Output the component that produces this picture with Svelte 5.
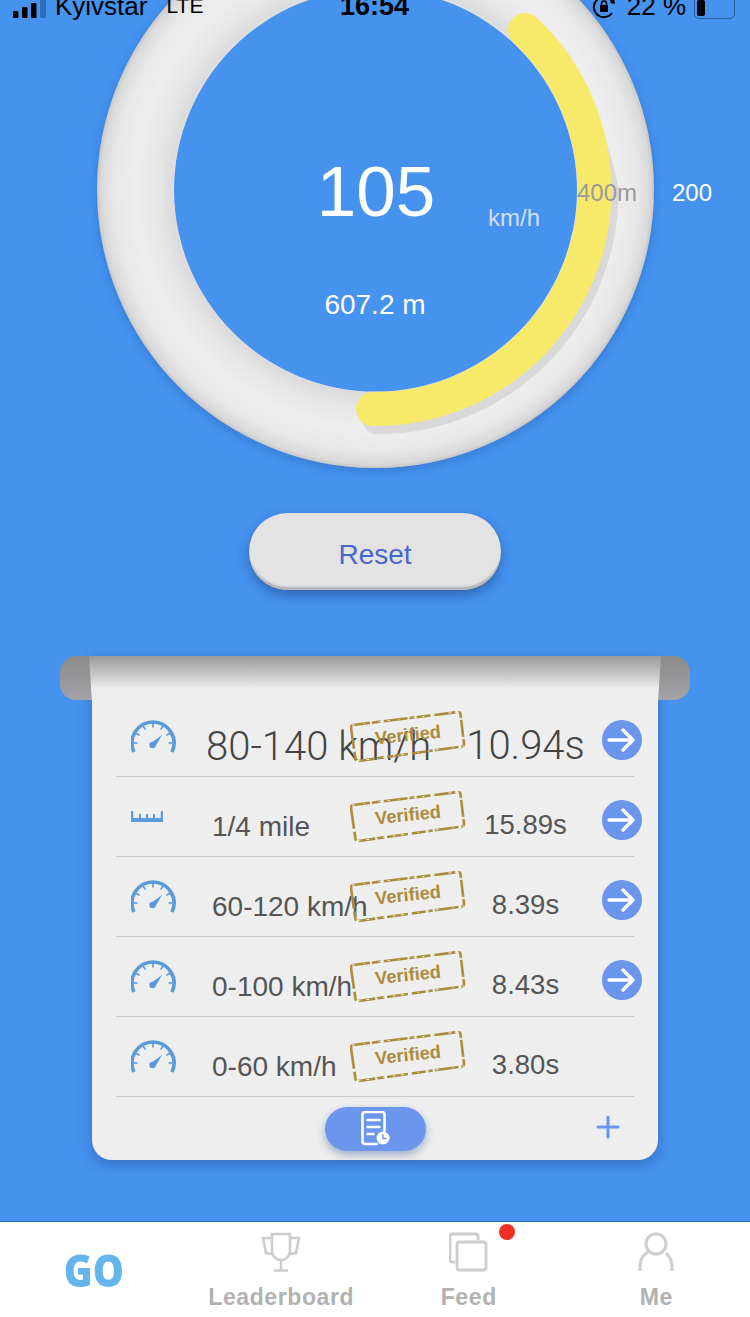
<script>
	const runs = [
		{ icon: 'gauge', label: '80-140 km/h', time: '10.94s', arrow: true, big: true },
		{ icon: 'ruler', label: '1/4 mile', time: '15.89s', arrow: true },
		{ icon: 'gauge', label: '60-120 km/h', time: '8.39s', arrow: true },
		{ icon: 'gauge', label: '0-100 km/h', time: '8.43s', arrow: true },
		{ icon: 'gauge', label: '0-60 km/h', time: '3.80s', arrow: false }
	];

	// dial ticks, degrees from straight up
	const ticks = [-90, -60, -30, 0, 30, 60, 90].map((deg) => {
		const a = (deg * Math.PI) / 180;
		return {
			x1: 22 + 20 * Math.sin(a),
			y1: 23 - 20 * Math.cos(a),
			x2: 22 + 15.5 * Math.sin(a),
			y2: 23 - 15.5 * Math.cos(a)
		};
	});
</script>

{#snippet gaugeIcon()}
	<svg class="icon-gauge" width="46" height="33" viewBox="0 0 46 33" fill="none" stroke="#5b9bd9">
		<path d="M3 32 A21 21 0 1 1 41 32" stroke-width="3.6" />
		{#each ticks as t}
			<line x1={t.x1} y1={t.y1} x2={t.x2} y2={t.y2} stroke-width="1.6" />
		{/each}
		<path d="M20 23 L31 15 L24 27 Z" fill="#5b9bd9" stroke="none" />
		<circle cx="21.5" cy="25" r="3.2" fill="#5b9bd9" stroke="none" />
	</svg>
{/snippet}

{#snippet rulerIcon()}
	<svg class="icon-ruler" width="33" height="12" viewBox="0 0 33 12" fill="#5b9bd9">
		<rect x="0" y="7" width="32" height="4" />
		<rect x="0" y="0" width="2.2" height="10" />
		<rect x="29.8" y="0" width="2.2" height="10" />
		<rect x="8" y="3" width="2" height="5" />
		<rect x="15" y="3" width="2" height="5" />
		<rect x="22" y="3" width="2" height="5" />
	</svg>
{/snippet}

{#snippet stamp()}
	<svg class="stamp" width="118" height="54" viewBox="0 0 118 54" fill="none">
		<path
			d="M3 15 L108 2 Q110 2 110.5 4 L114 34 Q114 36 112 36.5 L8 51 Q6 51 5.5 49 L1 18 Q1 15.5 3 15 Z"
			stroke="#ac8b3a"
			stroke-width="2.6"
			stroke-linejoin="round"
			stroke-dasharray="17 2 9 3 24 2 5 2 14 4 21 3 7 2"
		/>
		<path
			d="M3 15 L108 2 L114 36 L8 51 Z"
			stroke="#eeeeee"
			stroke-width="1"
			stroke-dasharray="2 9 1 14 3 6"
		/>
		<text x="58" y="31" transform="rotate(-6 58 25)" text-anchor="middle" class="stamp-text">Verified</text>
	</svg>
{/snippet}

<div class="page">
	<section class="dial">
		<svg class="dial-art" width="750" height="513" viewBox="0 0 750 513">
			<defs>
				<radialGradient id="ring" cx="375.5" cy="189.5" r="278.5" gradientUnits="userSpaceOnUse">
					<stop offset="0.72" stop-color="#d8d8d8" />
					<stop offset="0.78" stop-color="#e6e6e6" />
					<stop offset="0.86" stop-color="#eeeeee" />
					<stop offset="0.94" stop-color="#e8e8e8" />
					<stop offset="0.985" stop-color="#d9d9d9" />
					<stop offset="1" stop-color="#c8c8c8" />
				</radialGradient>
				<filter id="soft" x="-10%" y="-10%" width="120%" height="120%">
					<feDropShadow dx="0" dy="3" stdDeviation="5" flood-color="#1d4f96" flood-opacity="0.35" />
				</filter>
				<filter id="glow" x="-5%" y="-5%" width="110%" height="110%">
					<feDropShadow dx="0" dy="-1" stdDeviation="2" flood-color="#ffffff" flood-opacity="0.35" />
				</filter>
			</defs>
			<circle cx="375.5" cy="189.5" r="278.5" fill="url(#ring)" filter="url(#soft)" />
			<path
				d="M585 105 C603 130 615 160 618.5 192 A242.5 242.5 0 0 1 376 434.5 A17 17 0 0 1 376 401 L500 300 Z"
				fill="#d9d9d9"
			/>
			<circle cx="375.5" cy="190" r="201.5" fill="#4592ef" filter="url(#glow)" />
			<path
				d="M525 30 A219 219 0 0 1 373 409"
				fill="none"
				stroke="#f7e96a"
				stroke-width="34"
				stroke-linecap="round"
			/>
		</svg>
		<div class="speed">105</div>
		<div class="unit">km/h</div>
		<div class="distance">607.2 m</div>
		<div class="mark-400">400m</div>
		<div class="mark-200">200</div>
	</section>

	<button class="reset">Reset</button>

	<section class="sheet">
		<div class="roll roll-left"></div>
		<div class="roll roll-right"></div>
		<div class="fold"></div>

		<div class="rows">
			{#each runs as run}
				<div class="row" class:big={run.big}>
					<div class="row-icon">
						{#if run.icon === 'gauge'}
							{@render gaugeIcon()}
						{:else}
							{@render rulerIcon()}
						{/if}
					</div>
					<div class="row-label">{run.label}</div>
					<div class="row-time">{run.time}</div>
					{#if run.arrow}
						<svg class="row-arrow" width="40" height="40" viewBox="0 0 40 40" fill="none">
							<circle cx="20" cy="20" r="20" fill="#6b96ee" />
							<path
								d="M7 20 H31 M21 10 L31 20 L21 30"
								stroke="#fff"
								stroke-width="3.4"
								stroke-linecap="round"
								stroke-linejoin="round"
							/>
						</svg>
					{/if}
					{@render stamp()}
				</div>
			{/each}
		</div>

		<div class="sheet-foot">
			<div class="log-btn">
				<svg width="34" height="36" viewBox="0 0 34 36" fill="none" stroke="#fff" stroke-width="2.6">
					<path d="M20 33 H7 a2.5 2.5 0 0 1 -2.5 -2.5 V3.5 A2.5 2.5 0 0 1 7 1 H24 a2.5 2.5 0 0 1 2.5 2.5 V21" />
					<path d="M9.5 9 H21.5 M9.5 16 H21.5 M9.5 23 H15.5" stroke-linecap="round" />
					<circle cx="25" cy="27" r="6.5" fill="#fff" stroke="none" />
					<path d="M25 23.5 V27.5 H28.5" stroke="#6b96ee" stroke-width="1.5" />
				</svg>
			</div>
			<svg class="plus" width="24" height="24" viewBox="0 0 24 24" stroke="#6b96ee" stroke-width="3" stroke-linecap="round">
				<path d="M12 2 V22 M2 12 H22" />
			</svg>
		</div>
	</section>

	<nav class="tabs">
		<div class="tab">
			<span class="go">GO</span>
		</div>
		<div class="tab">
			<svg width="40" height="40" viewBox="0 0 40 40" fill="none" stroke="#cdcdcd" stroke-width="2.6">
				<path d="M11 2 H29 V19 A9 9 0 0 1 11 19 Z" />
				<path d="M11 6 H2 L5 21 L11 22 M29 6 H38 L35 21 L29 22" />
				<path d="M20 28 V38 M13 38.5 H27" />
			</svg>
			<span class="tab-label">Leaderboard</span>
		</div>
		<div class="tab">
			<svg width="40" height="40" viewBox="0 0 40 40" fill="none" stroke="#cdcdcd" stroke-width="2.8">
				<path d="M6 30 H3 a2 2 0 0 1 -2 -2 V4 a2 2 0 0 1 2 -2 H27 a2 2 0 0 1 2 2 V8" />
				<rect x="8" y="10" width="29" height="28" rx="2.5" />
			</svg>
			<span class="badge"></span>
			<span class="tab-label">Feed</span>
		</div>
		<div class="tab">
			<svg width="40" height="40" viewBox="0 0 40 40" fill="none" stroke="#cdcdcd" stroke-width="3">
				<circle cx="20" cy="12" r="10" />
				<path d="M4 39 V34 C4 27 7 23 12 20 M36 39 V34 C36 29 34 25 30 21" />
			</svg>
			<span class="tab-label">Me</span>
		</div>
	</nav>

	<div class="status">
		<div class="status-left">
			<svg width="34" height="18" viewBox="0 0 34 18" fill="#000">
				<rect x="0" y="11" width="5.5" height="7" rx="1" />
				<rect x="9" y="7" width="5.5" height="11" rx="1" />
				<rect x="18" y="3" width="5.5" height="15" rx="1" />
				<rect x="27" y="0" width="6" height="18" rx="1" fill="#2f6fc0" />
			</svg>
			<span>Kyivstar</span>
			<span class="lte">LTE</span>
		</div>
		<div class="status-time">16:54</div>
		<div class="status-right">
			<svg width="24" height="24" viewBox="0 0 24 24" fill="none" stroke="#000" stroke-width="2">
				<path d="M20 17 A10 10 0 1 1 21 7" />
				<path d="M18 7 L23 8 L22 3" fill="#000" stroke="none" />
				<rect x="8" y="9" width="8" height="7" fill="#000" stroke="none" />
				<path d="M9.5 9 V7.5 a2.5 2.5 0 0 1 5 0 V9" stroke-width="1.5" />
			</svg>
			<span class="pct">22 %</span>
			<div class="battery"><div class="battery-fill"></div></div>
		</div>
	</div>
</div>

<style>
	:global(body) {
		margin: 0;
		background: #4592ef;
	}

	.page {
		position: relative;
		width: 750px;
		height: 1317px;
		overflow: hidden;
		background: #4592ef;
		font-family: 'Liberation Sans', Arial, sans-serif;
		color: #444;
	}

	/* status bar sits partly off the top of the capture */
	.status {
		position: absolute;
		top: -9px;
		left: 0;
		right: 0;
		height: 30px;
		display: flex;
		align-items: center;
		justify-content: space-between;
		padding: 0 15px 0 13px;
		font-size: 26px;
		color: #000;
	}

	.status-left {
		display: flex;
		align-items: center;
		gap: 8px;
	}

	.status-left svg {
		margin-top: 6px;
	}

	.lte {
		margin-left: 11px;
		font-size: 21px;
	}

	.status-time {
		position: absolute;
		left: 340px;
		font-weight: 700;
		font-size: 27px;
	}

	.status-right {
		display: flex;
		align-items: center;
		gap: 11px;
	}

	.status-right svg {
		margin-top: 3px;
	}

	.pct {
		margin-right: -3px;
	}

	.battery {
		width: 41px;
		height: 22px;
		margin-top: 3px;
		border: 1.5px solid #2d5f9e;
		border-radius: 5px;
		padding: 2px;
		box-sizing: border-box;
	}

	.battery-fill {
		width: 8px;
		height: 100%;
		background: #000;
		border-radius: 2px;
	}

	.dial {
		position: relative;
		height: 513px;
	}

	.dial-art {
		display: block;
	}

	.speed {
		position: absolute;
		left: 0;
		width: 752px;
		top: 151px;
		text-align: center;
		font-size: 71px;
		line-height: 82px;
		color: #fff;
	}

	.unit {
		position: absolute;
		left: 488px;
		top: 205px;
		font-size: 24px;
		line-height: 26px;
		color: #d3dff2;
	}

	.distance {
		position: absolute;
		left: 0;
		width: 750px;
		top: 290px;
		text-align: center;
		font-size: 28px;
		line-height: 30px;
		color: #fff;
	}

	.mark-400 {
		position: absolute;
		left: 577px;
		top: 179px;
		font-size: 24px;
		line-height: 28px;
		color: #9b9b9b;
	}

	.mark-200 {
		position: absolute;
		left: 672px;
		top: 179px;
		font-size: 24px;
		line-height: 28px;
		color: #fff;
	}

	.reset {
		display: block;
		width: 252px;
		height: 77px;
		margin: 0 auto 66px;
		padding: 7px 0 0;
		border: 0;
		border-radius: 39px;
		background: #e3e3e3;
		box-shadow:
			inset 0 -4px 2px -1px #b5b3b3,
			0 5px 12px rgba(20, 50, 100, 0.45);
		color: #4767d3;
		font-family: inherit;
		font-size: 28px;
	}

	.sheet {
		position: relative;
		width: 566px;
		height: 504px;
		margin: 0 auto 61px;
		padding-top: 41px;
		box-sizing: border-box;
		background: #eeeeee;
		border-radius: 0 0 20px 20px;
		box-shadow: 0 4px 14px rgba(20, 50, 100, 0.35);
	}

	.roll {
		position: absolute;
		top: 0;
		width: 50px;
		height: 44px;
		background: linear-gradient(#8a8a8a, #a3a3a8);
	}

	.roll-left {
		left: -32px;
		border-radius: 16px 0 0 16px;
	}

	.roll-right {
		right: -32px;
		border-radius: 0 16px 16px 0;
	}

	.fold {
		position: absolute;
		top: 0;
		left: -3px;
		right: -3px;
		height: 44px;
		background: linear-gradient(#9a9a9a, #d6d6d6 55%, #eeeeee 75%);
		clip-path: polygon(0 0, 100% 0, 99.5% 100%, 0.5% 100%);
	}

	.rows {
		position: relative;
		margin: 0 24px;
	}

	.row {
		position: relative;
		display: grid;
		grid-template-columns: 96px 250px 130px 42px;
		height: 80px;
		box-sizing: border-box;
		border-bottom: 1px solid #c9c9c9;
		color: #555;
		font-size: 28px;
	}

	.row-icon {
		padding: 23px 0 0 15px;
	}

	.row-icon svg {
		display: block;
	}

	.icon-ruler {
		margin-top: 11px;
	}

	.row-label {
		padding-top: 35px;
		line-height: 30px;
		white-space: nowrap;
	}

	.row-time {
		grid-column: 3;
		padding: 33px 3px 0 0;
		line-height: 30px;
		text-align: center;
		font-size: 27.5px;
	}

	.row-arrow {
		grid-column: 4;
		margin: 23px 0 0 10px;
	}

	.row.big {
		color: #444;
		font-family: Roboto, 'Liberation Sans', sans-serif;
		font-weight: 300;
		font-size: 40px;
	}

	.row.big .row-label {
		margin-left: -6px;
		padding-top: 30px;
		line-height: 40px;
	}

	.row.big .row-time {
		padding-top: 29px;
		line-height: 40px;
		font-size: 40px;
	}

	.stamp {
		position: absolute;
		left: 234px;
		top: 13px;
	}

	.stamp-text {
		font-family: 'Liberation Sans', Arial, sans-serif;
		font-weight: 700;
		font-size: 18.3px;
		fill: #ac8b3a;
	}

	.sheet-foot {
		position: relative;
		display: flex;
		justify-content: center;
		padding-top: 10px;
	}

	.log-btn {
		display: flex;
		align-items: center;
		justify-content: center;
		width: 101px;
		height: 44px;
		border-radius: 22px;
		background: #6b96ee;
		box-shadow: 0 4px 8px rgba(40, 70, 140, 0.4);
	}

	.plus {
		position: absolute;
		right: 38px;
		top: 18px;
	}

	.tabs {
		display: grid;
		grid-template-columns: repeat(4, 1fr);
		height: 97px;
		box-sizing: border-box;
		background: #fff;
		border-top: 1px solid #2a6cb5;
	}

	.tab {
		position: relative;
		display: flex;
		flex-direction: column;
		align-items: center;
		padding-top: 10px;
	}

	.tab-label {
		margin-top: 11px;
		font-size: 23px;
		line-height: 28px;
		font-weight: 700;
		letter-spacing: 0.6px;
		color: #b2b2b2;
	}

	.go {
		margin-top: 8px;
		font-family: 'Open Sans', sans-serif;
		font-weight: 800;
		font-size: 44px;
		line-height: 60px;
		color: #64b5ec;
		transform: scaleX(0.89);
	}

	.badge {
		position: absolute;
		left: 124px;
		top: 2px;
		width: 16px;
		height: 16px;
		border-radius: 50%;
		background: #ee3024;
	}
</style>
